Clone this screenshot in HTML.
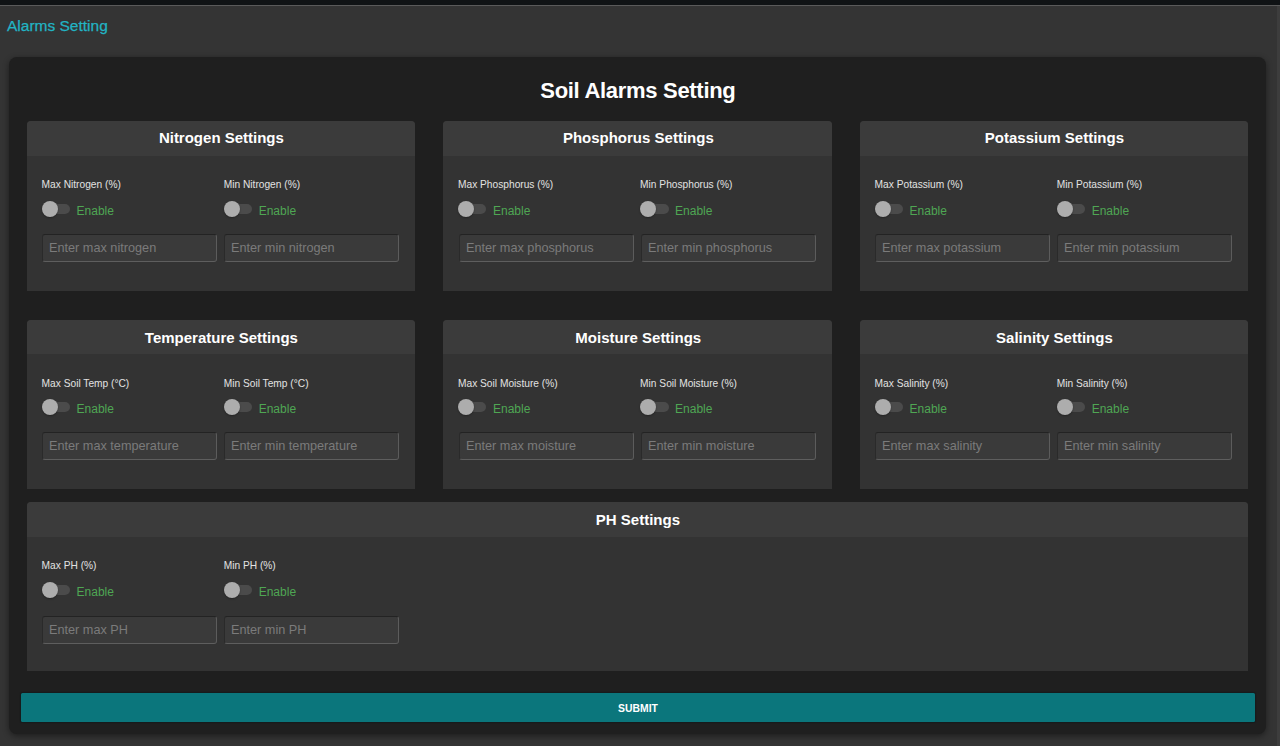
<!DOCTYPE html>
<html><head><meta charset="utf-8"><title>Alarms Setting</title><style>
*{box-sizing:border-box}
html,body{margin:0;padding:0}
body{width:1280px;height:746px;overflow:hidden;background:#343434;position:relative;font-family:"Liberation Sans",sans-serif}
.t{position:absolute;line-height:1;white-space:nowrap}
#topbar{position:absolute;left:0;top:0;width:1280px;height:5px;background:#101315}
#topline{position:absolute;left:0;top:5px;width:1280px;height:1px;background:#5a5a5a}
#sb{position:absolute;left:1277px;top:6px;width:3px;height:740px;background:#3d3d3d}
#card{position:absolute;left:9px;top:57px;width:1257px;height:677px;background:#1f1f1f;border-radius:8px;box-shadow:0 2px 6px rgba(0,0,0,.45)}
.sec{position:absolute;background:#333333;border-radius:4px 4px 0 0}
.hd{position:absolute;left:0;top:0;right:0;background:#3b3b3b;border-radius:4px 4px 0 0}
.trk{position:absolute;width:26px;height:10px;border-radius:5px;background:#4b4b4b}
.thm{position:absolute;width:16px;height:16px;border-radius:50%;background:#adadad;box-shadow:0 1px 2px rgba(0,0,0,.3)}
.inp{position:absolute;width:175px;background:#3a3a3a;border:1px solid;border-color:#232323 #5c5c5c #5e5e5e #2a2a2a;border-radius:3px}
#btn{position:absolute;left:20.5px;top:693px;width:1234.5px;height:29px;background:#0b767c;border-radius:1.5px;box-shadow:0 0 1px 1px rgba(5,20,22,.35)}
</style></head>
<body>
<div id="topbar"></div><div id="topline"></div><div id="sb"></div>
<div class="t" style="left:7.00px;top:17.58px;font-size:15.5px;color:#22b4c4;font-weight:normal;-webkit-text-stroke:0.25px #22b4c4">Alarms Setting</div>
<div id="card"></div>
<div class="t" style="left:9.40px;top:80.08px;width:1257px;text-align:center;font-size:22px;color:#fff;font-weight:bold;letter-spacing:-0.3px">Soil Alarms Setting</div>
<div class="sec" style="left:27px;top:121px;width:388px;height:170px"><div class="hd" style="height:35px"></div></div>
<div class="t hdt" style="left:27.40px;top:130.40px;width:388px;text-align:center;font-size:15px;color:#fff;font-weight:bold;">Nitrogen Settings</div>
<div class="t lab" style="left:41.60px;top:179.57px;font-size:10.2px;color:#e2e2e2;font-weight:normal;">Max Nitrogen (%)</div>
<div class="trk" style="left:44.0px;top:204.0px"></div>
<div class="thm" style="left:41.7px;top:201.0px"></div>
<div class="t" style="left:76.60px;top:204.84px;font-size:12.0px;color:#4fa653;font-weight:normal;">Enable</div>
<div class="inp" style="left:42.0px;top:234px;height:28px"></div>
<div class="t" style="left:49.00px;top:242.35px;font-size:12.7px;color:#7b7b7b;font-weight:normal;">Enter max nitrogen</div>
<div class="t lab" style="left:223.70px;top:179.57px;font-size:10.2px;color:#e2e2e2;font-weight:normal;">Min Nitrogen (%)</div>
<div class="trk" style="left:226.1px;top:204.0px"></div>
<div class="thm" style="left:223.8px;top:201.0px"></div>
<div class="t" style="left:258.70px;top:204.84px;font-size:12.0px;color:#4fa653;font-weight:normal;">Enable</div>
<div class="inp" style="left:224.0px;top:234px;height:28px"></div>
<div class="t" style="left:231.00px;top:242.35px;font-size:12.7px;color:#7b7b7b;font-weight:normal;">Enter min nitrogen</div>
<div class="sec" style="left:443px;top:121px;width:389px;height:170px"><div class="hd" style="height:35px"></div></div>
<div class="t hdt" style="left:443.80px;top:130.40px;width:389px;text-align:center;font-size:15px;color:#fff;font-weight:bold;">Phosphorus Settings</div>
<div class="t lab" style="left:458.00px;top:179.57px;font-size:10.2px;color:#e2e2e2;font-weight:normal;">Max Phosphorus (%)</div>
<div class="trk" style="left:460.4px;top:204.0px"></div>
<div class="thm" style="left:458.1px;top:201.0px"></div>
<div class="t" style="left:493.00px;top:204.84px;font-size:12.0px;color:#4fa653;font-weight:normal;">Enable</div>
<div class="inp" style="left:459.0px;top:234px;height:28px"></div>
<div class="t" style="left:466.00px;top:242.35px;font-size:12.7px;color:#7b7b7b;font-weight:normal;">Enter max phosphorus</div>
<div class="t lab" style="left:640.10px;top:179.57px;font-size:10.2px;color:#e2e2e2;font-weight:normal;">Min Phosphorus (%)</div>
<div class="trk" style="left:642.5px;top:204.0px"></div>
<div class="thm" style="left:640.2px;top:201.0px"></div>
<div class="t" style="left:675.10px;top:204.84px;font-size:12.0px;color:#4fa653;font-weight:normal;">Enable</div>
<div class="inp" style="left:641.0px;top:234px;height:28px"></div>
<div class="t" style="left:648.00px;top:242.35px;font-size:12.7px;color:#7b7b7b;font-weight:normal;">Enter min phosphorus</div>
<div class="sec" style="left:860px;top:121px;width:388px;height:170px"><div class="hd" style="height:35px"></div></div>
<div class="t hdt" style="left:860.40px;top:130.40px;width:388px;text-align:center;font-size:15px;color:#fff;font-weight:bold;">Potassium Settings</div>
<div class="t lab" style="left:874.60px;top:179.57px;font-size:10.2px;color:#e2e2e2;font-weight:normal;">Max Potassium (%)</div>
<div class="trk" style="left:877.0px;top:204.0px"></div>
<div class="thm" style="left:874.7px;top:201.0px"></div>
<div class="t" style="left:909.60px;top:204.84px;font-size:12.0px;color:#4fa653;font-weight:normal;">Enable</div>
<div class="inp" style="left:875.0px;top:234px;height:28px"></div>
<div class="t" style="left:882.00px;top:242.35px;font-size:12.7px;color:#7b7b7b;font-weight:normal;">Enter max potassium</div>
<div class="t lab" style="left:1056.70px;top:179.57px;font-size:10.2px;color:#e2e2e2;font-weight:normal;">Min Potassium (%)</div>
<div class="trk" style="left:1059.1px;top:204.0px"></div>
<div class="thm" style="left:1056.8px;top:201.0px"></div>
<div class="t" style="left:1091.70px;top:204.84px;font-size:12.0px;color:#4fa653;font-weight:normal;">Enable</div>
<div class="inp" style="left:1057.0px;top:234px;height:28px"></div>
<div class="t" style="left:1064.00px;top:242.35px;font-size:12.7px;color:#7b7b7b;font-weight:normal;">Enter min potassium</div>
<div class="sec" style="left:27px;top:320px;width:388px;height:169px"><div class="hd" style="height:34px"></div></div>
<div class="t hdt" style="left:27.40px;top:330.30px;width:388px;text-align:center;font-size:15px;color:#fff;font-weight:bold;">Temperature Settings</div>
<div class="t lab" style="left:41.60px;top:378.57px;font-size:10.2px;color:#e2e2e2;font-weight:normal;">Max Soil Temp (°C)</div>
<div class="trk" style="left:44.0px;top:401.8px"></div>
<div class="thm" style="left:41.7px;top:398.8px"></div>
<div class="t" style="left:76.60px;top:402.64px;font-size:12.0px;color:#4fa653;font-weight:normal;">Enable</div>
<div class="inp" style="left:42.0px;top:432px;height:28px"></div>
<div class="t" style="left:49.00px;top:440.35px;font-size:12.7px;color:#7b7b7b;font-weight:normal;">Enter max temperature</div>
<div class="t lab" style="left:223.70px;top:378.57px;font-size:10.2px;color:#e2e2e2;font-weight:normal;">Min Soil Temp (°C)</div>
<div class="trk" style="left:226.1px;top:401.8px"></div>
<div class="thm" style="left:223.8px;top:398.8px"></div>
<div class="t" style="left:258.70px;top:402.64px;font-size:12.0px;color:#4fa653;font-weight:normal;">Enable</div>
<div class="inp" style="left:224.0px;top:432px;height:28px"></div>
<div class="t" style="left:231.00px;top:440.35px;font-size:12.7px;color:#7b7b7b;font-weight:normal;">Enter min temperature</div>
<div class="sec" style="left:443px;top:320px;width:389px;height:169px"><div class="hd" style="height:34px"></div></div>
<div class="t hdt" style="left:443.80px;top:330.30px;width:389px;text-align:center;font-size:15px;color:#fff;font-weight:bold;">Moisture Settings</div>
<div class="t lab" style="left:458.00px;top:378.57px;font-size:10.2px;color:#e2e2e2;font-weight:normal;">Max Soil Moisture (%)</div>
<div class="trk" style="left:460.4px;top:401.8px"></div>
<div class="thm" style="left:458.1px;top:398.8px"></div>
<div class="t" style="left:493.00px;top:402.64px;font-size:12.0px;color:#4fa653;font-weight:normal;">Enable</div>
<div class="inp" style="left:459.0px;top:432px;height:28px"></div>
<div class="t" style="left:466.00px;top:440.35px;font-size:12.7px;color:#7b7b7b;font-weight:normal;">Enter max moisture</div>
<div class="t lab" style="left:640.10px;top:378.57px;font-size:10.2px;color:#e2e2e2;font-weight:normal;">Min Soil Moisture (%)</div>
<div class="trk" style="left:642.5px;top:401.8px"></div>
<div class="thm" style="left:640.2px;top:398.8px"></div>
<div class="t" style="left:675.10px;top:402.64px;font-size:12.0px;color:#4fa653;font-weight:normal;">Enable</div>
<div class="inp" style="left:641.0px;top:432px;height:28px"></div>
<div class="t" style="left:648.00px;top:440.35px;font-size:12.7px;color:#7b7b7b;font-weight:normal;">Enter min moisture</div>
<div class="sec" style="left:860px;top:320px;width:388px;height:169px"><div class="hd" style="height:34px"></div></div>
<div class="t hdt" style="left:860.40px;top:330.30px;width:388px;text-align:center;font-size:15px;color:#fff;font-weight:bold;">Salinity Settings</div>
<div class="t lab" style="left:874.60px;top:378.57px;font-size:10.2px;color:#e2e2e2;font-weight:normal;">Max Salinity (%)</div>
<div class="trk" style="left:877.0px;top:401.8px"></div>
<div class="thm" style="left:874.7px;top:398.8px"></div>
<div class="t" style="left:909.60px;top:402.64px;font-size:12.0px;color:#4fa653;font-weight:normal;">Enable</div>
<div class="inp" style="left:875.0px;top:432px;height:28px"></div>
<div class="t" style="left:882.00px;top:440.35px;font-size:12.7px;color:#7b7b7b;font-weight:normal;">Enter max salinity</div>
<div class="t lab" style="left:1056.70px;top:378.57px;font-size:10.2px;color:#e2e2e2;font-weight:normal;">Min Salinity (%)</div>
<div class="trk" style="left:1059.1px;top:401.8px"></div>
<div class="thm" style="left:1056.8px;top:398.8px"></div>
<div class="t" style="left:1091.70px;top:402.64px;font-size:12.0px;color:#4fa653;font-weight:normal;">Enable</div>
<div class="inp" style="left:1057.0px;top:432px;height:28px"></div>
<div class="t" style="left:1064.00px;top:440.35px;font-size:12.7px;color:#7b7b7b;font-weight:normal;">Enter min salinity</div>
<div class="sec" style="left:27px;top:502px;width:1221px;height:169px"><div class="hd" style="height:35px"></div></div>
<div class="t hdt" style="left:27.40px;top:512.10px;width:1221px;text-align:center;font-size:15px;color:#fff;font-weight:bold;">PH Settings</div>
<div class="t lab" style="left:41.60px;top:561.17px;font-size:10.2px;color:#e2e2e2;font-weight:normal;">Max PH (%)</div>
<div class="trk" style="left:44.0px;top:585.0px"></div>
<div class="thm" style="left:41.7px;top:582.0px"></div>
<div class="t" style="left:76.60px;top:585.84px;font-size:12.0px;color:#4fa653;font-weight:normal;">Enable</div>
<div class="inp" style="left:42.0px;top:615.5px;height:28px"></div>
<div class="t" style="left:49.00px;top:623.85px;font-size:12.7px;color:#7b7b7b;font-weight:normal;">Enter max PH</div>
<div class="t lab" style="left:223.70px;top:561.17px;font-size:10.2px;color:#e2e2e2;font-weight:normal;">Min PH (%)</div>
<div class="trk" style="left:226.1px;top:585.0px"></div>
<div class="thm" style="left:223.8px;top:582.0px"></div>
<div class="t" style="left:258.70px;top:585.84px;font-size:12.0px;color:#4fa653;font-weight:normal;">Enable</div>
<div class="inp" style="left:224.0px;top:615.5px;height:28px"></div>
<div class="t" style="left:231.00px;top:623.85px;font-size:12.7px;color:#7b7b7b;font-weight:normal;">Enter min PH</div>
<div id="btn"></div>
<div class="t" style="left:21.00px;top:704.00px;width:1234px;text-align:center;font-size:10.4px;color:#fff;font-weight:bold;">SUBMIT</div>
</body></html>
